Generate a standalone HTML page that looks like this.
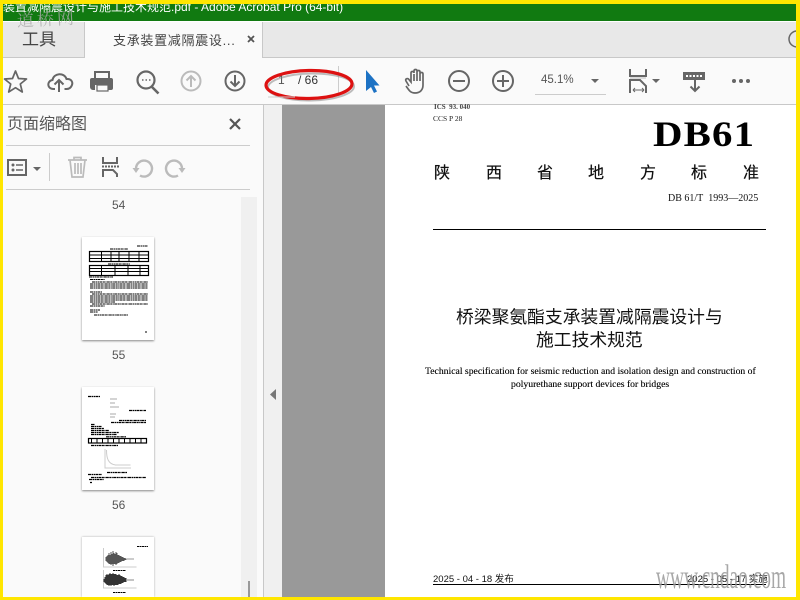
<!DOCTYPE html>
<html><head><meta charset="utf-8">
<style>
html,body{margin:0;padding:0;width:800px;height:600px;overflow:hidden;background:#fff}
body{position:relative;font-family:"Liberation Sans","Noto Sans CJK SC",sans-serif}
.a{position:absolute;white-space:nowrap}
.s{font-family:"Liberation Serif","Noto Sans CJK SC",serif;color:#111}
.c{font-size:16px;line-height:19px;color:#111;top:164px;text-shadow:0 0 .4px #000}
svg{position:absolute;left:0;top:0}
</style></head><body>
<div class="a" style="left:3px;top:4px;width:793px;height:17px;background:#117a11;overflow:hidden"></div>
<div class="a" style="left:3px;top:-1px;width:400px;height:21px;overflow:hidden;color:#fff;font-size:12px;line-height:17px;">装置减隔震设计与施工技术规范.pdf - Adobe Acrobat Pro (64-bit)</div>
<div class="a" style="left:3px;top:22px;width:793px;height:36px;background:#e8e8e8"></div>
<div class="a" style="left:84px;top:22px;width:179px;height:36px;background:#fafafa;border-left:1px solid #c8c8c8;border-right:1px solid #c8c8c8;box-sizing:border-box"></div>
<div class="a" style="left:3px;top:57px;width:81px;height:1px;background:#c8c8c8"></div>
<div class="a" style="left:263px;top:57px;width:533px;height:1px;background:#c8c8c8"></div>
<div class="a" style="left:22px;top:30px;font-size:17px;line-height:20px;color:#444">工具</div>
<div class="a" style="left:113px;top:32px;font-size:13px;line-height:17px;color:#444;letter-spacing:.7px">支承装置减隔震设...</div>
<div class="a" style="left:3px;top:58px;width:793px;height:46px;background:#fafafa"></div>
<div class="a" style="left:3px;top:104px;width:793px;height:1px;background:#c8c8c8"></div>
<div class="a" style="left:3px;top:105px;width:260px;height:492px;background:#fafafa"></div>
<div class="a" style="left:263px;top:105px;width:19px;height:492px;background:#f0f0f0;border-left:1px solid #c8c8c8;box-sizing:border-box"></div>
<div class="a" style="left:282px;top:105px;width:103px;height:492px;background:#999"></div>
<div class="a" style="left:385px;top:105px;width:411px;height:492px;background:#fff"></div>
<div class="a" style="left:241px;top:197px;width:16px;height:400px;background:#f0f0f0"></div>
<div class="a" style="left:248px;top:581px;width:2px;height:16px;background:#999"></div>
<div class="a" style="left:6px;top:145px;width:244px;height:1px;background:#ccc"></div>
<div class="a" style="left:6px;top:189px;width:244px;height:1px;background:#ccc"></div>
<div class="a" style="left:49px;top:153px;width:1px;height:28px;background:#ccc"></div>
<div class="a" style="left:338px;top:66px;width:1px;height:30px;background:#ccc"></div>
<div class="a" style="left:535px;top:94px;width:71px;height:1px;background:#ccc"></div>
<div class="a" style="left:7px;top:115px;font-size:16px;line-height:20px;color:#555">页面缩略图</div>
<div class="a" style="left:112px;top:198px;font-size:12px;line-height:14px;color:#555">54</div>
<div class="a" style="left:112px;top:348px;font-size:12px;line-height:14px;color:#555">55</div>
<div class="a" style="left:112px;top:498px;font-size:12px;line-height:14px;color:#555">56</div>
<div class="a" style="left:278px;top:73px;font-size:12px;line-height:14px;color:#555">1</div>
<div class="a" style="left:298px;top:73px;font-size:12px;line-height:14px;color:#333">/ 66</div>
<div class="a" style="left:541px;top:73px;font-size:11.500px;line-height:15px;color:#555">45.1%</div>

<!-- thumbnails -->
<div class="a" style="left:82px;top:237px;width:72px;height:103px;background:#fff;box-shadow:0 1px 2px #888"></div>
<div class="a" style="left:82px;top:387px;width:72px;height:103px;background:#fff;box-shadow:0 1px 2px #888"></div>
<div class="a" style="left:82px;top:537px;width:72px;height:60px;background:#fff;box-shadow:0 0 2px #aaa"></div>

<!-- document -->
<div class="a s" style="left:434px;top:103px;font-size:7px;line-height:9px;font-weight:bold;color:#444">ICS&nbsp; 93. 040</div>
<div class="a s" style="left:433px;top:114px;font-size:7.500px;line-height:9px;color:#222">CCS P 28</div>
<div class="a s" style="left:653px;top:113px;font-size:35.500px;line-height:42px;font-weight:bold;color:#000;letter-spacing:1px;transform:scaleX(1.150);transform-origin:left">DB61</div>
<div class="a c" style="left:434px">陕</div>
<div class="a c" style="left:486px">西</div>
<div class="a c" style="left:537px">省</div>
<div class="a c" style="left:588px">地</div>
<div class="a c" style="left:640px">方</div>
<div class="a c" style="left:691px">标</div>
<div class="a c" style="left:743px">准</div>
<div class="a s" style="left:668px;top:193px;font-size:10px;line-height:12px;">DB 61/T&nbsp; 1993—2025</div>
<div class="a" style="left:433px;top:229px;width:333px;height:1px;background:#000"></div>
<div class="a" style="left:456px;top:307px;font-size:17.800px;line-height:21px;color:#111">桥梁聚氨酯支承装置减隔震设计与</div>
<div class="a" style="left:536px;top:330px;font-size:17.800px;line-height:21px;color:#111">施工技术规范</div>
<div class="a s" style="left:425px;top:366px;font-size:9.700px;line-height:12px;text-shadow:0 0 .3px #000">Technical specification for seismic reduction and isolation design and construction of</div>
<div class="a s" style="left:511px;top:379px;font-size:9.700px;line-height:12px;text-shadow:0 0 .3px #000">polyurethane support devices for bridges</div>
<div class="a" style="left:433px;top:574px;font-size:9.500px;line-height:12px;color:#111">2025 - 04 - 18 发布</div>
<div class="a" style="left:687px;top:574px;font-size:9.500px;line-height:12px;color:#111">2025 - 05 - 17 实施</div>
<div class="a" style="left:433px;top:584px;width:333px;height:1px;background:#000"></div>
<div class="a" style="left:656px;top:558px;font-family:'Liberation Serif',serif;font-size:34px;line-height:40px;color:#999;opacity:.85;transform:scaleX(.57);transform-origin:left">www.cndao.com</div>
<div class="a" style="left:17px;top:9px;font-family:'Liberation Serif','Noto Serif CJK SC',serif;font-size:17px;line-height:22px;color:#aaa;opacity:.8;transform:rotate(-3deg);letter-spacing:3px">道桥网</div>

<svg width="800" height="600" viewBox="0 0 800 600" fill="none">
<!-- thumbnail 55 -->
<g stroke="#000" fill="none">
<rect x="89.500" y="251.500" width="59" height="10" stroke-width="1.200"/>
<rect x="89.500" y="265.500" width="59" height="10" stroke-width="1.200"/>
<path d="M89 255h60M89 258.500h60M101.500 251v10M111 251v10M119 251v10M129 251v10M139 251v10M90 268.500h59M90 271.500h59M101.500 265v10M115 265v10M128 265v10M140 265v10" stroke-width="1"/>
<g stroke-width="1" stroke-dasharray="3 .5 2 .5 1 .4">
<path d="M137 246h11M110 249h18M108 264h22M89 277h24M90 279.500h15M92 282h56M90 284h58M90 286h58M90 288h58M90 292h12M92 294h56M90 296h58M90 298h58M90 300h58M90 302h25M92 304h56M90 306h15M90 310h10M90 312h8M94 315h34M145 332h2"/>
</g>
</g>
<!-- thumbnail 56 -->
<path d="M110 399h7M110 403h5M110 407h9M110 414h6M110 417h5" stroke="#aaa"/>
<path d="M105 449v19h26" stroke="#ccc"/>
<path d="M106.500 450c0 9 2 14 9 15h15" stroke="#ccc"/>
<g stroke="#000" stroke-width="1.200" stroke-dasharray="3 .5 2 .5 1 .4">
<path d="M88 396.500h12M129 410.500h17M119 420.500h27M111 422.500h35M91 424.500h4M91 426.500h11M91 428.500h13M91 430.500h18M91 432.500h28M91 434.500h26M106 436.800h20M91 445.500h27M107 472.500h20M88 474.500h14M91 477.500h55M89 479.500h15M90 482.500h2"/>
</g>
<rect x="88.500" y="438.500" width="58" height="4.500" stroke="#000" stroke-width="1.200"/>
<path d="M91 441h54" stroke="#000" stroke-width="4" stroke-dasharray="1 4.500"/>
<!-- thumbnail 57 -->
<path d="M103.500 548v19h33M103.500 570v18h33" stroke="#ccc"/>
<path d="M137 546.500h11M113 570.500h13M113 592.500h13" stroke="#000" stroke-dasharray="2 .5"/>
<path d="M106 557v4M107 556v6M108 555v8M109 553v11M110 555v9M111 552v13M112 554v10M113 551v15M114 553v11M115 554v10M116 552v13M117 553v11M118 555v8M119 555v8M120 556v6M121 556v6M122 557v4M123 557v4M124 558v3M125 558v2M126 558.500v1.500" stroke="#555"/>
<path d="M127 559h7" stroke="#999"/>
<path d="M104 579v3M105 577v6M106 575v9M107 574v11M108 575v10M109 574v12M110 573v12M111 574v12M112 574v11M113 573v12M114 574v12M115 574v11M116 574v11M117 575v10M118 575v10M119 574v10M120 575v9M121 576v8M122 576v7M123 577v6M124 577v5M125 578v4M126 578v4" stroke="#333"/>
<path d="M127 580h7" stroke="#888"/>

<!-- tab close, help -->
<path d="M248 36l6 6M254 36l-6 6" stroke="#555" stroke-width="1.800"/>
<circle cx="797" cy="39" r="8" stroke="#666" stroke-width="1.500"/>

<!-- star -->
<path d="M15.500 71l3 7.500 8 .5-6.200 5 2 8-6.800-4.300-6.800 4.300 2-8-6.200-5 8-.5z" stroke="#666" stroke-width="1.700" stroke-linejoin="round"/>
<!-- upload cloud -->
<path d="M55 89h-1.500c-6.500 0-7-8-1-9 1-7 12-8 14-1 5-.500 7 3.500 5 7-1 2-3 3-5 3h-2" stroke="#666" stroke-width="2"/>
<path d="M59 92V80M54.500 84.500l4.500-4.500 4.500 4.500" stroke="#666" stroke-width="2"/>
<!-- print -->
<path d="M95 79v-7h14v7" stroke="#666" stroke-width="2"/>
<path d="M93 78h18a2 2 0 0 1 2 2v8a2 2 0 0 1-2 2h-3v-5h-13v5h-2a3 3 0 0 1-3-3v-7a2 2 0 0 1 2-2z" fill="#666"/>
<rect x="97" y="85" width="11" height="6" fill="#fafafa" stroke="#666" stroke-width="1.200"/>
<!-- search -->
<circle cx="146" cy="80" r="8.500" stroke="#666" stroke-width="2.200"/><path d="M152 87l6.500 6.500" stroke="#666" stroke-width="2.600"/>
<path d="M142 80h1.500M145.500 80h1.500M149 80h1.500" stroke="#666" stroke-width="1.500"/>
<!-- up -->
<circle cx="191" cy="81" r="9.500" stroke="#bbb" stroke-width="2"/><path d="M191 87v-11M186.500 80.500l4.500-4.500 4.500 4.500" stroke="#bbb" stroke-width="2"/>
<!-- down -->
<circle cx="235" cy="81" r="9.500" stroke="#666" stroke-width="2"/><path d="M235 75v11M230.500 81.500l4.500 4.500 4.500-4.500" stroke="#666" stroke-width="2"/>
<!-- red ellipse -->
<ellipse cx="311" cy="87" rx="43" ry="13.500" stroke="#888" stroke-width="2" opacity=".55" transform="rotate(-1 311 87)"/>
<ellipse cx="309" cy="84.500" rx="43" ry="14" stroke="#dd1111" stroke-width="3.200" transform="rotate(-1 309 84.500)"/>
<path d="M268 97h27" stroke="#ccc"/>
<!-- cursor -->
<path d="M366 70v21l5-4 3 6 3-1.500-3-6h5.500z" fill="#1d72c4"/>
<!-- hand -->
<path d="M409 86l-3-5c-1-2 1-3 2.500-2l2.500 3v-9c0-2 3-2 3 0v-2c0-2 3-2 3 0v1c0-2 3-2 3 0v2c0-2 3-2 3 0v11c0 5-3 8-8 8s-6-3-9-7M414 74v7M417 72v9M420 73v8" stroke="#666" stroke-width="1.700"/>
<!-- minus/plus -->
<circle cx="459" cy="81" r="10" stroke="#666" stroke-width="2"/><path d="M453 81h12" stroke="#666" stroke-width="2"/>
<circle cx="503" cy="81" r="10" stroke="#666" stroke-width="2"/><path d="M497 81h12M503 75v12" stroke="#666" stroke-width="2"/>
<!-- carets -->
<path d="M591 79h8l-4 4z" fill="#666"/><path d="M652 79h8l-4 4z" fill="#666"/>
<path d="M33 167h8l-4 4z" fill="#666"/>
<!-- fit page -->
<path d="M630 69v7h16v-7" stroke="#666" stroke-width="2"/><path d="M630 78h16" stroke="#bbb" stroke-width="1"/>
<path d="M630 93V80h10l6 6v7" stroke="#666" stroke-width="2"/>
<path d="M633 90h11M633 90l2-2M633 90l2 2M644 90l-2-2M644 90l-2 2" stroke="#666"/>
<!-- scroll tool -->
<rect x="683" y="72" width="22" height="8" fill="#666"/><path d="M686 76h16" stroke="#fff" stroke-dasharray="2 1.500" stroke-width="2"/>
<path d="M695 80v11M690.500 86.500l4.500 4.500 4.500-4.500" stroke="#666" stroke-width="2"/>
<!-- dots -->
<circle cx="734" cy="81" r="2" fill="#666"/><circle cx="741" cy="81" r="2" fill="#666"/><circle cx="748" cy="81" r="2" fill="#666"/>
<!-- panel close -->
<path d="M230 119l10 10M240 119l-10 10" stroke="#555" stroke-width="2.200"/>
<!-- options icon -->
<rect x="8" y="160" width="18" height="15" stroke="#666" stroke-width="2"/><circle cx="13" cy="165" r="1.500" fill="#666"/><circle cx="13" cy="170" r="1.500" fill="#666"/><path d="M16 165h7M16 170h7" stroke="#666" stroke-width="1.500"/>
<!-- trash -->
<path d="M68 160h19M74 160v-2.500h7v2.500M70 160l2 17h11l2-17M75 163v11M78 163v11M81 163v11" stroke="#bbb" stroke-width="1.700"/>
<!-- extract -->
<path d="M103 157v6h14v-6" stroke="#666" stroke-width="2"/>
<path d="M102 166.500h17" stroke="#666" stroke-width="2" stroke-dasharray="2 1"/>
<path d="M103 177v-7h10l4 4v3" stroke="#666" stroke-width="2"/>
<!-- rotate -->
<path d="M140 175.500a8 8 0 1 0-4-7" stroke="#bbb" stroke-width="2.400"/><path d="M132.500 168h7l-3.500 5z" fill="#bbb"/>
<path d="M178 175.500a8 8 0 1 1 4-7" stroke="#bbb" stroke-width="2.400"/><path d="M178.500 168h7l-3.500 5z" fill="#bbb"/>
<!-- split arrow -->
<path d="M276 389v11l-6-5.500z" fill="#777"/>
</svg>

<!-- yellow frame -->
<div class="a" style="left:0;top:0;width:800px;height:4px;background:#ffe600"></div>
<div class="a" style="left:0;top:597px;width:800px;height:3px;background:#ffe600"></div>
<div class="a" style="left:0;top:0;width:3px;height:600px;background:#ffe600"></div>
<div class="a" style="left:796px;top:0;width:4px;height:600px;background:#ffe600"></div>
</body></html>
